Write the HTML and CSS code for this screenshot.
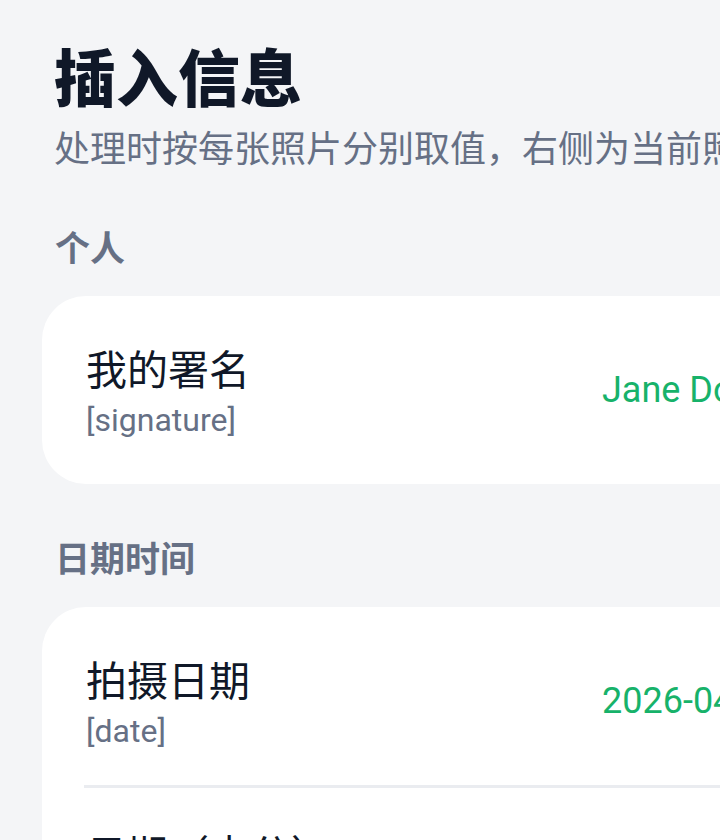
FILE: index.html
```html
<!DOCTYPE html>
<html lang="zh-CN">
<head>
<meta charset="utf-8">
<title>插入信息</title>
<link rel="stylesheet" href="styles.css">
</head>
<body>
<main class="page">
  <header class="head">
    <h1 class="title">插入信息</h1>
    <p class="subtitle">处理时按每张照片分别取值，右侧为当前照片的预览值</p>
  </header>

  <section class="group group-first">
    <h2 class="group-label">个人</h2>
    <div class="card">
      <div class="row">
        <div class="row-text">
          <div class="row-label">我的署名</div>
          <div class="row-key">[signature]</div>
        </div>
        <div class="row-value">Jane Doe</div>
      </div>
    </div>
  </section>

  <section class="group">
    <h2 class="group-label">日期时间</h2>
    <div class="card">
      <div class="row">
        <div class="row-text">
          <div class="row-label">拍摄日期</div>
          <div class="row-key">[date]</div>
        </div>
        <div class="row-value">2026-04-18</div>
      </div>
      <div class="divider"></div>
      <div class="row">
        <div class="row-text">
          <div class="row-label">日期（点分）</div>
          <div class="row-key">[date_dot]</div>
        </div>
        <div class="row-value">2026.04.18</div>
      </div>
    </div>
  </section>
</main>
</body>
</html>
```

FILE: styles.css
```css
html, body {
  margin: 0;
  padding: 0;
  overflow: hidden;
  background: #f4f5f7;
}

body {
  font-family: Roboto, "Noto Sans CJK SC", sans-serif;
  color: #101828;
}

.page {
  width: 1080px;
  padding: 44px 0 40px;
  box-sizing: border-box;
}

.head {
  padding-left: 54px;
}

.title {
  margin: 0;
  font-size: 62px;
  line-height: 74px;
  font-weight: 900;
  color: #101828;
}

.subtitle {
  margin: 10px 0 0;
  font-size: 36px;
  line-height: 44px;
  font-weight: 400;
  color: #667085;
  white-space: nowrap;
}

.group {
  margin-top: 56px;
}

.group-first {
  margin-top: 57px;
}

.group-label {
  margin: 0 0 25px 55px;
  font-size: 35px;
  line-height: 42px;
  font-weight: 700;
  color: #667085;
}

.card {
  margin: 0 42px;
  padding: 10px 0;
  background: #ffffff;
  border-radius: 44px;
}

.row {
  display: grid;
  grid-template-columns: 516px 1fr;
  align-items: center;
  min-height: 168px;
  padding-left: 44px;
}

.row-text {
  padding-top: 10px;
}

.row-label {
  font-size: 41px;
  line-height: 50px;
  color: #101828;
  white-space: nowrap;
}

.row-key {
  font-size: 32px;
  line-height: 48px;
  color: #667085;
}

.row-value {
  font-size: 36px;
  line-height: 44px;
  color: #17b26a;
  white-space: nowrap;
}

.divider {
  height: 3px;
  margin: 0 0 3px 42px;
  background: #eaecf0;
}
```
